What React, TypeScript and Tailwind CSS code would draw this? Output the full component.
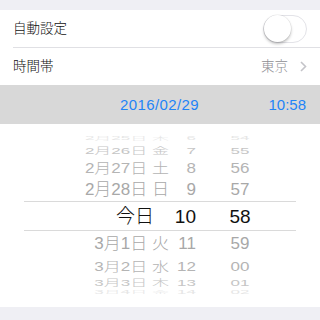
import React from 'react'

type PickerRow = {
  date: string
  hour: string
  minute: string
  h: string
  scale: number
  color: string
}

const before: PickerRow[] = [
  { date: '2月25日 木', hour: '6', minute: '54', h: 'h-[6px]', scale: 0.3, color: 'text-[#e6e6e6]' },
  { date: '2月26日 金', hour: '7', minute: '55', h: 'h-[18px]', scale: 0.55, color: 'text-[#c6c6c6]' },
  { date: '2月27日 土', hour: '8', minute: '56', h: 'h-[18px]', scale: 0.82, color: 'text-[#b4b4b4]' },
  { date: '2月28日 日', hour: '9', minute: '57', h: 'h-[24px]', scale: 1, color: 'text-[#a8a8a8]' },
]

const after: PickerRow[] = [
  { date: '3月1日 火', hour: '11', minute: '59', h: 'h-[25px]', scale: 0.95, color: 'text-[#a8a8a8]' },
  { date: '3月2日 水', hour: '12', minute: '00', h: 'h-[20px]', scale: 0.75, color: 'text-[#b4b4b4]' },
  { date: '3月3日 木', hour: '13', minute: '01', h: 'h-[14px]', scale: 0.52, color: 'text-[#c6c6c6]' },
  { date: '3月4日 金', hour: '14', minute: '02', h: 'h-[4px]', scale: 0.3, color: 'text-[#e6e6e6]' },
]

const font = { fontFamily: '"Liberation Sans", "Noto Sans CJK JP", sans-serif' }

export default function App() {
  return (
    <div className="h-[320px] w-[320px] overflow-hidden bg-[#efeff4] font-light" style={font}>
      <div className="h-[10px]" />

      <div className="bg-white">
        <div className="flex h-[37px] items-center justify-between pl-[13px] pr-[13px]">
          <span className="text-[13.5px] leading-none text-[#111]">自動設定</span>
          <div className="flex h-[28px] w-[44px] items-center rounded-full border border-[#e3e3e8] bg-white">
            <div className="h-[27px] w-[27px] rounded-full bg-white shadow-[0_2px_3px_rgba(0,0,0,0.25),0_0_0_0.5px_rgba(0,0,0,0.08)]" />
          </div>
        </div>
        <div className="ml-[13px] h-px bg-[#e0e0e4]" />
        <div className="flex h-[37px] items-center justify-between pl-[13px] pr-[13px]">
          <span className="text-[13.5px] leading-none text-[#111]">時間帯</span>
          <div className="flex items-center gap-[12px]">
            <span className="text-[13.5px] leading-none text-[#8e8e93]">東京</span>
            <svg width="7" height="11" viewBox="0 0 7 11">
              <polyline points="1,1 5.5,5.5 1,10" fill="none" stroke="#c4c4c9" strokeWidth="1.6" />
            </svg>
          </div>
        </div>
      </div>

      <div className="flex h-[39px] items-center bg-[#d8d8d8] pl-[120px] pr-[14px] text-[15px] leading-none text-[#1f84f7]">
        <span className="tracking-[0.4px]">2016/02/29</span>
        <span className="ml-auto">10:58</span>
      </div>

      <div className="flex h-[183px] flex-col bg-white pt-[11px]">
        {before.map((r) => (
          <Row key={r.date} row={r} />
        ))}
        <div className="mx-[24px] flex h-[30px] items-center border-y border-[#dadada] text-[19px] leading-none text-[#111]">
          <span className="w-[145px] pr-[15px] text-right">今日</span>
          <span className="w-[27px] text-right">10</span>
          <span className="ml-[24px] w-[40px] text-center">58</span>
        </div>
        {after.map((r) => (
          <Row key={r.date} row={r} />
        ))}
      </div>
    </div>
  )
}

function Row({ row }: { row: PickerRow }) {
  return (
    <div className={`flex ${row.h} items-center overflow-hidden text-[17px] leading-none ${row.color}`}>
      <div className="flex w-full items-center" style={{ transform: `scaleY(${row.scale})` }}>
        <span className="w-[169px] text-right">{row.date}</span>
        <span className="w-[27px] text-right">{row.hour}</span>
        <span className="ml-[24px] w-[40px] text-center">{row.minute}</span>
      </div>
    </div>
  )
}
